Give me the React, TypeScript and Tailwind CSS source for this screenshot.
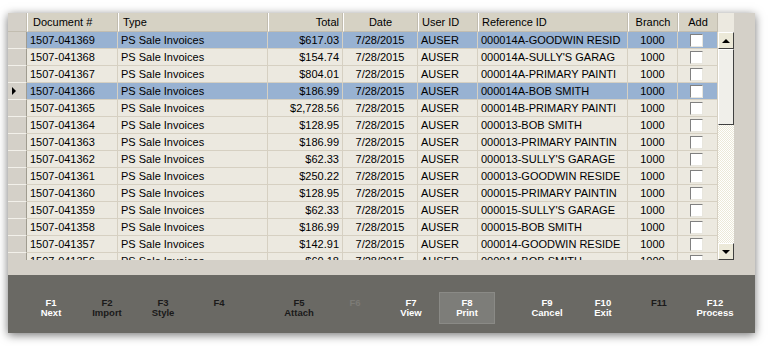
const rows = [
  ["1507-041369", "$617.03", "000014A-GOODWIN RESID"],
  ["1507-041368", "$154.74", "000014A-SULLY'S GARAG"],
  ["1507-041367", "$804.01", "000014A-PRIMARY PAINTI"],
  ["1507-041366", "$186.99", "000014A-BOB SMITH"],
  ["1507-041365", "$2,728.56", "000014B-PRIMARY PAINTI"],
  ["1507-041364", "$128.95", "000013-BOB SMITH"],
  ["1507-041363", "$186.99", "000013-PRIMARY PAINTIN"],
  ["1507-041362", "$62.33", "000013-SULLY'S GARAGE"],
  ["1507-041361", "$250.22", "000013-GOODWIN RESIDE"],
  ["1507-041360", "$128.95", "000015-PRIMARY PAINTIN"],
  ["1507-041359", "$62.33", "000015-SULLY'S GARAGE"],
  ["1507-041358", "$186.99", "000015-BOB SMITH"],
  ["1507-041357", "$142.91", "000014-GOODWIN RESIDE"],
  ["1507-041356", "$60.18", "000014-BOB SMITH"],
];

const selected = [0, 3];
const current = 3;

const cols = "grid grid-cols-[19px_91px_150px_75px_75px_60px_150px_50px_40px]";

type Key = { f: string; label?: string; tone: "light" | "dark" | "off"; active?: boolean };

const groups: Key[][] = [
  [
    { f: "F1", label: "Next", tone: "light" },
    { f: "F2", label: "Import", tone: "dark" },
    { f: "F3", label: "Style", tone: "dark" },
    { f: "F4", tone: "dark" },
  ],
  [
    { f: "F5", label: "Attach", tone: "dark" },
    { f: "F6", tone: "off" },
    { f: "F7", label: "View", tone: "light" },
    { f: "F8", label: "Print", tone: "light", active: true },
  ],
  [
    { f: "F9", label: "Cancel", tone: "light" },
    { f: "F10", label: "Exit", tone: "light" },
    { f: "F11", tone: "dark" },
    { f: "F12", label: "Process", tone: "light" },
  ],
];

function Checkbox() {
  return (
    <div className="w-[13px] h-[13px] bg-white border border-t-[#808080] border-l-[#808080] border-b-[#e8e6de] border-r-[#e8e6de]" />
  );
}

function ScrollButton({ up }: { up?: boolean }) {
  return (
    <div className="h-[17px] w-full bg-[#ece9d8] border border-t-white border-l-white border-r-[#404040] border-b-[#404040] flex items-center justify-center">
      <div
        className={
          up
            ? "w-0 h-0 border-l-[4px] border-r-[4px] border-b-[4px] border-l-transparent border-r-transparent border-b-black"
            : "w-0 h-0 border-l-[4px] border-r-[4px] border-t-[4px] border-l-transparent border-r-transparent border-t-black"
        }
      />
    </div>
  );
}

export default function App() {
  return (
    <div className="w-[769px] h-[346px] bg-white pl-[8px] pt-[13px] font-['Liberation_Sans',Arial,sans-serif]">
      <div className="w-[747px] h-[320px] bg-[#d4d0c8] flex flex-col shadow-[0_2px_9px_rgba(0,0,0,0.55)]">
        <div className="flex h-[247px]">
          <div className="w-[726px] bg-[#ece9e0] flex flex-col">
            {/* header */}
            <div className="flex h-[19px]">
              <div className={`${cols} h-[19px] text-[11px] text-black`}>
                <div className="bg-[#d4d0c8] border-r border-b border-[#c2bdb0]" />
                <div className="bg-[#d6d2c4] border-l border-l-white border-r border-r-[#c2bdb0] border-b border-b-[#c2bdb0] pl-[5px] flex items-center">Document #</div>
                <div className="bg-[#d6d2c4] border-l border-l-white border-r border-r-[#c2bdb0] border-b border-b-[#c2bdb0] pl-[4px] flex items-center">Type</div>
                <div className="bg-[#d6d2c4] border-l border-l-white border-r border-r-[#c2bdb0] border-b border-b-[#c2bdb0] pr-[3px] flex items-center justify-end">Total</div>
                <div className="bg-[#d6d2c4] border-l border-l-white border-r border-r-[#c2bdb0] border-b border-b-[#c2bdb0] flex items-center justify-center">Date</div>
                <div className="bg-[#d6d2c4] border-l border-l-white border-r border-r-[#c2bdb0] border-b border-b-[#c2bdb0] pl-[3px] flex items-center">User ID</div>
                <div className="bg-[#d6d2c4] border-l border-l-white border-r border-r-[#c2bdb0] border-b border-b-[#c2bdb0] pl-[3px] flex items-center">Reference ID</div>
                <div className="bg-[#d6d2c4] border-l border-l-white border-r border-r-[#c2bdb0] border-b border-b-[#c2bdb0] flex items-center justify-center">Branch</div>
                <div className="bg-[#d6d2c4] border-l border-l-white border-r border-r-[#c2bdb0] border-b border-b-[#c2bdb0] flex items-center justify-center">Add</div>
              </div>
            </div>
            {/* body */}
            <div className="flex flex-1 overflow-hidden">
              <div className="w-[710px] overflow-hidden">
                {rows.map((r, i) => {
                  const sel = selected.includes(i);
                  const bg = sel ? "bg-[#98b2d2]" : "bg-[#ece9e0]";
                  const cell = `${bg} border-r border-b border-[#d6d0c2] flex items-center overflow-hidden whitespace-nowrap`;
                  return (
                    <div key={r[0]} className={`${cols} h-[17px] text-[11px] text-black`}>
                      <div className="bg-[#d4d0c8] border-r border-r-[#a09c90] border-b border-b-[#f2f0ea] flex items-center pl-[4px]">
                        {i === current && (
                          <div className="w-0 h-0 border-t-[4px] border-b-[4px] border-l-[4px] border-t-transparent border-b-transparent border-l-black" />
                        )}
                      </div>
                      <div className={`${cell} pl-[3px]`}>{r[0]}</div>
                      <div className={`${cell} pl-[3px]`}>PS Sale Invoices</div>
                      <div className={`${cell} justify-end pr-[3px]`}>{r[1]}</div>
                      <div className={`${cell} justify-center`}>7/28/2015</div>
                      <div className={`${cell} pl-[3px]`}>AUSER</div>
                      <div className={`${cell} pl-[3px]`}>{r[2]}</div>
                      <div className={`${cell} justify-center`}>1000</div>
                      <div className={`${cell} justify-center pr-[3px]`}>
                        <Checkbox />
                      </div>
                    </div>
                  );
                })}
              </div>
              {/* scrollbar */}
              <div className="w-[16px] flex flex-col bg-[repeating-conic-gradient(#ffffff_0%_25%,#ece9d8_0%_50%)] bg-[length:2px_2px]">
                <ScrollButton up />
                <div className="h-[76px] bg-[#f0efea] border border-t-white border-l-white border-r-[#404040] border-b-[#404040]" />
                <div className="flex-1" />
                <ScrollButton />
              </div>
            </div>
          </div>
        </div>
        <div className="h-[15px]" />
        {/* function keys */}
        <div className="flex-1 bg-[#6a6964] flex pl-[15px] pt-[17px] gap-[24px] text-[9.5px] leading-[10px] font-bold">
          {groups.map((g, gi) => (
            <div key={gi} className="flex">
              {g.map((k) => (
                <div
                  key={k.f}
                  className={`w-[56px] h-[32px] flex flex-col items-center justify-center ${
                    k.active ? "bg-[#7d7d79] border border-[#8a8a86]" : ""
                  } ${k.tone === "light" ? "text-white" : k.tone === "dark" ? "text-[#1a1a1a]" : "text-[#7c7b76]"}`}
                >
                  <span>{k.f}</span>
                  <span className={k.label ? "" : "invisible"}>{k.label ?? "-"}</span>
                </div>
              ))}
            </div>
          ))}
        </div>
      </div>
    </div>
  );
}
